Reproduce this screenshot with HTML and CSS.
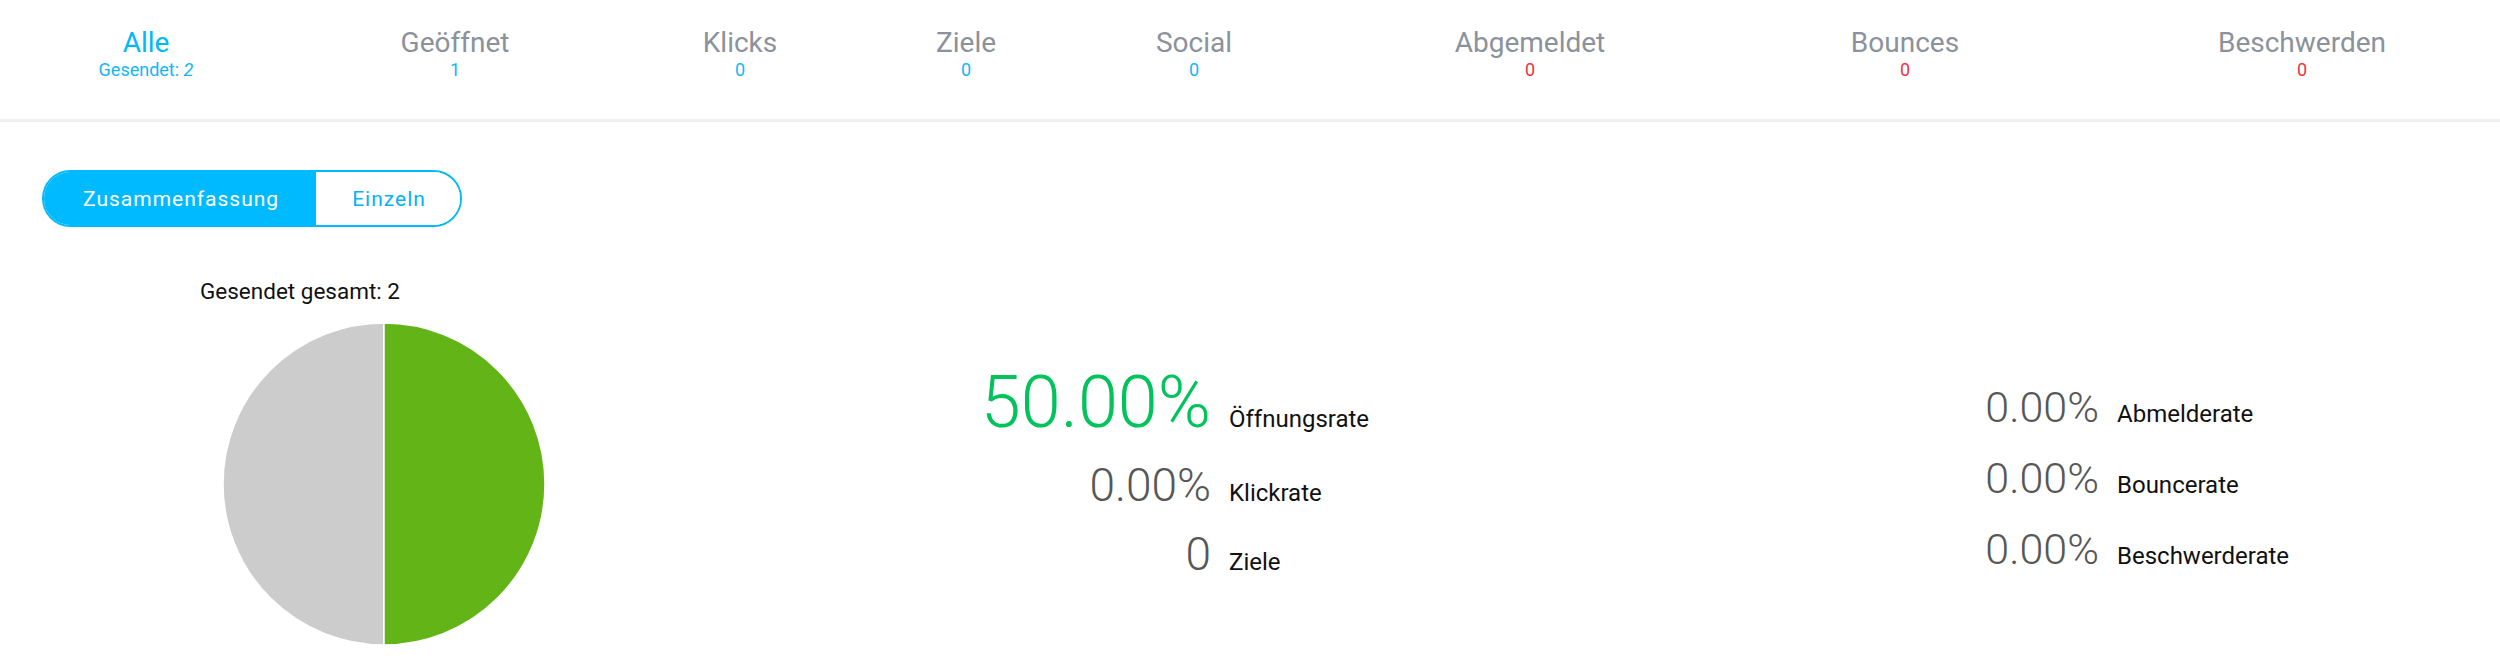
FILE: index.html
```html
<!DOCTYPE html>
<html lang="de">
<head>
<meta charset="utf-8">
<title>Kampagnen-Statistik</title>
<link rel="stylesheet" href="styles.css">
</head>
<body>
<nav class="tabs">
  <div class="tab active"><span class="tab-label">Alle</span><span class="tab-count blue">Gesendet: <em>2</em></span></div>
  <div class="tab"><span class="tab-label">Geöffnet</span><span class="tab-count blue">1</span></div>
  <div class="tab"><span class="tab-label">Klicks</span><span class="tab-count blue">0</span></div>
  <div class="tab"><span class="tab-label">Ziele</span><span class="tab-count blue">0</span></div>
  <div class="tab"><span class="tab-label">Social</span><span class="tab-count blue">0</span></div>
  <div class="tab"><span class="tab-label">Abgemeldet</span><span class="tab-count red">0</span></div>
  <div class="tab"><span class="tab-label">Bounces</span><span class="tab-count red">0</span></div>
  <div class="tab tab-last"><span class="tab-label">Beschwerden</span><span class="tab-count red">0</span></div>
</nav>

<div class="toggle">
  <button class="toggle-btn on">Zusammenfassung</button>
  <button class="toggle-btn off">Einzeln</button>
</div>

<main class="summary">
  <section class="chart">
    <div class="chart-title">Gesendet gesamt: 2</div>
    <svg class="pie" width="324" height="324" viewBox="0 0 324 324">
      <path d="M162 1 A161 161 0 0 0 162 323 Z" fill="#cccccc" stroke="#ffffff" stroke-width="1.5"/>
      <path d="M162 1 A161 161 0 0 1 162 323 Z" fill="#63b517" stroke="#ffffff" stroke-width="1.5"/>
    </svg>
  </section>

  <section class="stats stats-left">
    <span class="num big green">50.00%</span><span class="lbl">Öffnungsrate</span>
    <span class="num mid">0.00%</span><span class="lbl">Klickrate</span>
    <span class="num mid">0</span><span class="lbl">Ziele</span>
  </section>

  <section class="stats stats-right">
    <span class="num small">0.00%</span><span class="lbl">Abmelderate</span>
    <span class="num small">0.00%</span><span class="lbl">Bouncerate</span>
    <span class="num small">0.00%</span><span class="lbl">Beschwerderate</span>
  </section>
</main>
</body>
</html>
```

FILE: styles.css
```css
html, body {
  margin: 0;
  padding: 0;
  background: #ffffff;
  font-family: Roboto, "Liberation Sans", Arial, sans-serif;
  color: #111111;
}

.tabs {
  display: grid;
  grid-template-columns: 292px 326px 244px 208px 248px 424px 326px 432px;
  border-bottom: 3px solid #eff0f4;
  overflow: hidden;
}

.tab {
  height: 122px;
  box-sizing: border-box;
  margin-bottom: -3px;
  padding-top: 26px;
  border-bottom: 3px solid transparent;
  display: flex;
  flex-direction: column;
  align-items: center;
}

.tab-last {
  padding-left: 36px;
}

.tab.active {
  border-bottom-color: #00b9fc;
}

.tab-label {
  font-size: 28px;
  line-height: 33px;
  color: #8b929b;
}

.tab.active .tab-label {
  color: #00b9fc;
}

.tab-count {
  font-size: 18px;
  line-height: 21px;
}

.tab-count em {
  font-style: italic;
}

.blue { color: #12b7f7; }
.red { color: #f0323f; }

.toggle {
  display: inline-flex;
  margin: 48px 0 0 42px;
  border: 2px solid #00baff;
  border-radius: 30px;
  overflow: hidden;
}

.toggle-btn {
  height: 53px;
  padding: 0 37px 0 39px;
  border: 0;
  margin: 0;
  background: #ffffff;
  color: #00b4f5;
  font-family: Roboto, "Liberation Sans", Arial, sans-serif;
  font-size: 21px;
  letter-spacing: 1px;
}

.toggle-btn.off {
  padding: 0 34px 0 36px;
}

.toggle-btn.on {
  background: #00baff;
  color: #ffffff;
}

.summary {
  display: grid;
  grid-template-columns: 516px 888px 1fr;
  margin-top: 50px;
  padding-left: 42px;
}

.chart-title {
  padding-top: 2px;
  font-size: 22.5px;
  line-height: 25px;
  text-align: center;
  color: #111111;
}

.pie {
  display: block;
  margin: 18px 0 0 180px;
}

.stats {
  display: grid;
  grid-template-columns: 653px auto;
  column-gap: 18px;
  align-items: baseline;
  align-content: start;
}

.stats-left {
  padding-top: 90px;
  row-gap: 23px;
}

.stats-right {
  padding-top: 109px;
  row-gap: 28px;
}

.num {
  text-align: right;
  line-height: 1;
  font-weight: 300;
  color: #575757;
}

.big { font-size: 72px; }
.mid { font-size: 46px; }
.small { font-size: 43px; }
.green { color: #00c35b; }

.lbl {
  font-size: 24px;
  line-height: 1;
  color: #111111;
}
```
